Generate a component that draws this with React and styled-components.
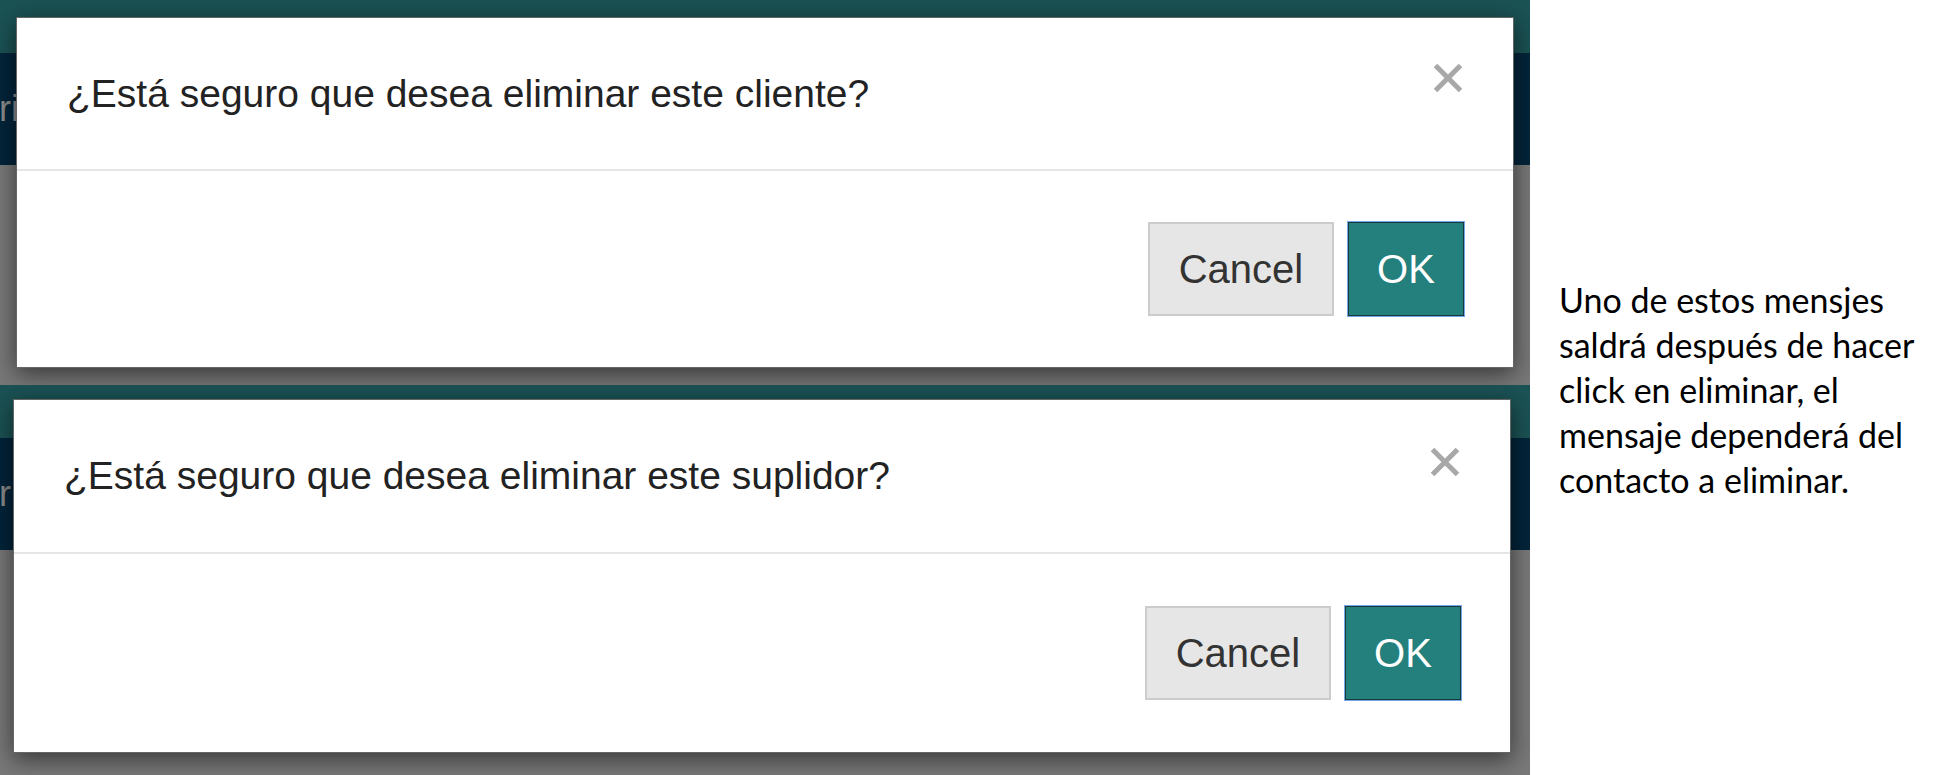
import React from "react";
import styled, { createGlobalStyle } from "styled-components";

const GlobalStyle = createGlobalStyle`
  html, body {
    margin: 0;
    padding: 0;
    background: #ffffff;
  }
  #root {
    height: 775px;
  }
`;

const Page = styled.div`
  display: flex;
  width: 1954px;
  height: 775px;
  overflow: hidden;
  font-family: "Liberation Sans", Arial, sans-serif;
`;

const Shots = styled.div`
  display: flex;
  flex-direction: column;
  width: 1530px;
  flex-shrink: 0;
`;

// one captured screen: app header bands behind a dark backdrop
const Screen = styled.div`
  position: relative;
  box-sizing: border-box;
  height: ${(p) => p.$height}px;
  padding: ${(p) => p.$top}px 0 0 ${(p) => p.$left}px;
  overflow: hidden;
  background: linear-gradient(
    to bottom,
    #1b5254 0,
    #1b5254 53px,
    #03243a 53px,
    #03243a 165px,
    #787878 165px
  );
`;

const BehindText = styled.span`
  position: absolute;
  left: -1px;
  top: 88px;
  font-size: 36px;
  color: #8a8a8a;
  white-space: nowrap;
`;

const Modal = styled.div`
  position: relative;
  width: 1498px;
  box-sizing: border-box;
  background: #ffffff;
  border: 1px solid rgba(0, 0, 0, 0.6);
  box-shadow: 0 6px 22px rgba(0, 0, 0, 0.55);
`;

const Header = styled.div`
  display: flex;
  align-items: center;
  justify-content: space-between;
  height: ${(p) => p.$height}px;
  padding: 0 50px 0 50px;
  border-bottom: 2px solid #e5e5e5;
`;

const Title = styled.h4`
  margin: 0;
  font-size: 39px;
  font-weight: normal;
  color: #222222;
`;

const Close = styled.button`
  display: flex;
  align-self: flex-start;
  padding: 0;
  margin: ${(p) => p.$top}px 0 0 0;
  border: 0;
  background: none;
`;

const Footer = styled.div`
  display: flex;
  align-items: center;
  justify-content: flex-end;
  gap: 14px;
  height: ${(p) => p.$height}px;
  padding: 0 49px;
`;

const Button = styled.button`
  box-sizing: border-box;
  height: 94px;
  width: ${(p) => (p.$primary ? 116 : 186)}px;
  padding: 0;
  font-family: "Liberation Sans", Arial, sans-serif;
  font-size: 40px;
  color: ${(p) => (p.$primary ? "#ffffff" : "#333333")};
  background: ${(p) => (p.$primary ? "#24807c" : "#e6e6e6")};
  border: ${(p) => (p.$primary ? "1px solid #163a3a" : "2px solid #cccccc")};
  outline: ${(p) => (p.$primary ? "1px solid #74a6e8" : "none")};
`;

const Note = styled.div`
  display: flex;
  align-items: center;
  flex: 1;
  padding: 4px 0 0 29px;
  font-family: Lato, "Liberation Sans", sans-serif;
  font-size: 34px;
  line-height: 45px;
  color: #000000;
`;

function CloseIcon() {
  return (
    <svg width="30" height="30" viewBox="0 0 30 30">
      <path d="M2.5 2.5 L27.5 27.5 M27.5 2.5 L2.5 27.5" stroke="#a8a8a8" strokeWidth="5" fill="none" />
    </svg>
  );
}

function ConfirmShot({ who, height, top, left, headerHeight, footerHeight, closeTop }) {
  return (
    <Screen $height={height} $top={top} $left={left}>
      <BehindText>ri</BehindText>
      <Modal>
        <Header $height={headerHeight}>
          <Title>¿Está seguro que desea eliminar este {who}?</Title>
          <Close $top={closeTop}>
            <CloseIcon />
          </Close>
        </Header>
        <Footer $height={footerHeight}>
          <Button>Cancel</Button>
          <Button $primary>OK</Button>
        </Footer>
      </Modal>
    </Screen>
  );
}

export default function App() {
  return (
    <>
      <GlobalStyle />
      <Page>
        <Shots>
          <ConfirmShot who="cliente" height={385} top={17} left={16} headerHeight={151} footerHeight={196} closeTop={45} />
          <ConfirmShot who="suplidor" height={390} top={14} left={13} headerHeight={152} footerHeight={198} closeTop={47} />
        </Shots>
        <Note>
          <div>
            Uno de estos mensjes
            <br />
            saldrá después de hacer
            <br />
            click en eliminar, el
            <br />
            mensaje dependerá del
            <br />
            contacto a eliminar.
          </div>
        </Note>
      </Page>
    </>
  );
}
